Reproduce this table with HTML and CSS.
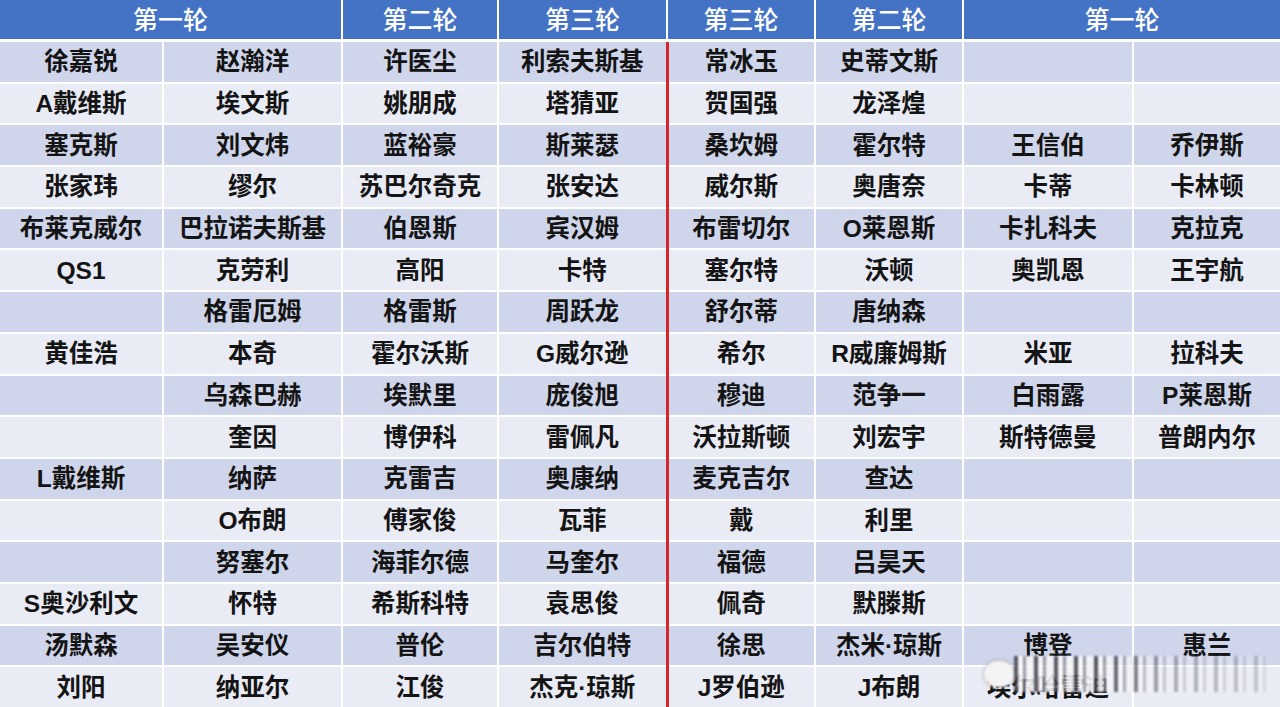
FILE: index.html
```html
<!DOCTYPE html>
<html lang="zh-CN">
<head>
<meta charset="utf-8">
<link rel="stylesheet" href="styles.css">
</head>
<body>
<div class="wrap">
<table class="draw">
<colgroup>
<col class="c1"><col class="c2"><col class="c3"><col class="c4"><col class="c5"><col class="c6"><col class="c7"><col class="c8">
</colgroup>
<thead>
<tr><th colspan="2">第一轮</th><th>第二轮</th><th>第三轮</th><th>第三轮</th><th>第二轮</th><th colspan="2">第一轮</th></tr>
</thead>
<tbody>
<tr><td>徐嘉锐</td><td>赵瀚洋</td><td>许医尘</td><td>利索夫斯基</td><td class="sep">常冰玉</td><td>史蒂文斯</td><td></td><td></td></tr>
<tr><td>A戴维斯</td><td>埃文斯</td><td>姚朋成</td><td>塔猜亚</td><td class="sep">贺国强</td><td>龙泽煌</td><td></td><td></td></tr>
<tr><td>塞克斯</td><td>刘文炜</td><td>蓝裕豪</td><td>斯莱瑟</td><td class="sep">桑坎姆</td><td>霍尔特</td><td>王信伯</td><td>乔伊斯</td></tr>
<tr><td>张家玮</td><td>缪尔</td><td>苏巴尔奇克</td><td>张安达</td><td class="sep">威尔斯</td><td>奥唐奈</td><td>卡蒂</td><td>卡林顿</td></tr>
<tr><td>布莱克威尔</td><td>巴拉诺夫斯基</td><td>伯恩斯</td><td>宾汉姆</td><td class="sep">布雷切尔</td><td>O莱恩斯</td><td>卡扎科夫</td><td>克拉克</td></tr>
<tr><td>QS1</td><td>克劳利</td><td>高阳</td><td>卡特</td><td class="sep">塞尔特</td><td>沃顿</td><td>奥凯恩</td><td>王宇航</td></tr>
<tr><td></td><td>格雷厄姆</td><td>格雷斯</td><td>周跃龙</td><td class="sep">舒尔蒂</td><td>唐纳森</td><td></td><td></td></tr>
<tr><td>黄佳浩</td><td>本奇</td><td>霍尔沃斯</td><td>G威尔逊</td><td class="sep">希尔</td><td>R威廉姆斯</td><td>米亚</td><td>拉科夫</td></tr>
<tr><td></td><td>乌森巴赫</td><td>埃默里</td><td>庞俊旭</td><td class="sep">穆迪</td><td>范争一</td><td>白雨露</td><td>P莱恩斯</td></tr>
<tr><td></td><td>奎因</td><td>博伊科</td><td>雷佩凡</td><td class="sep">沃拉斯顿</td><td>刘宏宇</td><td>斯特德曼</td><td>普朗内尔</td></tr>
<tr><td>L戴维斯</td><td>纳萨</td><td>克雷吉</td><td>奥康纳</td><td class="sep">麦克吉尔</td><td>查达</td><td></td><td></td></tr>
<tr><td></td><td>O布朗</td><td>傅家俊</td><td>瓦菲</td><td class="sep">戴</td><td>利里</td><td></td><td></td></tr>
<tr><td></td><td>努塞尔</td><td>海菲尔德</td><td>马奎尔</td><td class="sep">福德</td><td>吕昊天</td><td></td><td></td></tr>
<tr><td>S奥沙利文</td><td>怀特</td><td>希斯科特</td><td>袁思俊</td><td class="sep">佩奇</td><td>默滕斯</td><td></td><td></td></tr>
<tr><td>汤默森</td><td>吴安仪</td><td>普伦</td><td>吉尔伯特</td><td class="sep">徐思</td><td>杰米·琼斯</td><td>博登</td><td>惠兰</td></tr>
<tr><td>刘阳</td><td>纳亚尔</td><td>江俊</td><td>杰克·琼斯</td><td class="sep">J罗伯逊</td><td>J布朗</td><td>埃尔哈雷迪</td><td></td></tr>
</tbody>
</table>
<div class="mark"><span class="pill"></span><span class="bars"></span></div>
</div>
</body>
</html>
```

FILE: styles.css
```css
html, body {
  margin: 0;
  padding: 0;
  background: #ffffff;
}
body {
  width: 1280px;
  height: 707px;
  overflow: hidden;
  font-family: "Liberation Sans", "Noto Sans CJK SC", sans-serif;
}
.wrap {
  position: relative;
  width: 1280px;
  height: 707px;
}
.draw {
  width: 1280px;
  table-layout: fixed;
  border-collapse: collapse;
}
.c1 { width: 163px; }
.c2 { width: 179px; }
.c3 { width: 156px; }
.c4 { width: 169px; }
.c5 { width: 148px; }
.c6 { width: 148px; }
.c7 { width: 170px; }
.c8 { width: 147px; }
.draw th {
  background: #4472c4;
  color: #ffffff;
  font-weight: 500;
  font-size: 25px;
  height: 39px;
  padding: 0;
  border: 2px solid #ffffff;
  border-top: 0;
  border-bottom: 3px solid #ffffff;
  line-height: 38px;
}
.draw th:first-child { border-left: 0; }
.draw th:last-child { border-right: 0; }
.draw td {
  height: 39.7px;
  padding: 0;
  text-align: center;
  vertical-align: middle;
  font-size: 24.5px;
  font-weight: 700;
  color: #141414;
  border: 2px solid #ffffff;
  line-height: 39px;
  white-space: nowrap;
}
.draw td:first-child { border-left: 0; }
.draw td:last-child { border-right: 0; }
.draw tbody tr:nth-child(odd) td { background: #cfd5ea; }
.draw tbody tr:nth-child(even) td { background: #e9ebf5; }
.draw td.sep { border-left: 3px solid #d7262b; }
.mark {
  position: absolute;
  left: 984px;
  top: 656px;
  width: 284px;
  height: 36px;
  display: flex;
  align-items: center;
  filter: blur(1.2px);
}
.pill {
  width: 30px;
  height: 26px;
  border-radius: 14px;
  background: #f4f4f4;
  box-shadow: 0 0 3px #888;
}
.bars {
  flex: 1;
  height: 36px;
  background-image:
    repeating-linear-gradient(90deg,
      rgba(60,60,70,0.85) 0 4px,
      rgba(250,250,250,0.9) 4px 9px,
      rgba(120,120,130,0.7) 9px 12px,
      rgba(245,245,248,0.9) 12px 20px);
  -webkit-mask-image: linear-gradient(90deg, #000 0%, #000 35%, rgba(0,0,0,0.45) 60%, rgba(0,0,0,0.25) 100%);
  mask-image: linear-gradient(90deg, #000 0%, #000 35%, rgba(0,0,0,0.45) 60%, rgba(0,0,0,0.25) 100%);
}
```
